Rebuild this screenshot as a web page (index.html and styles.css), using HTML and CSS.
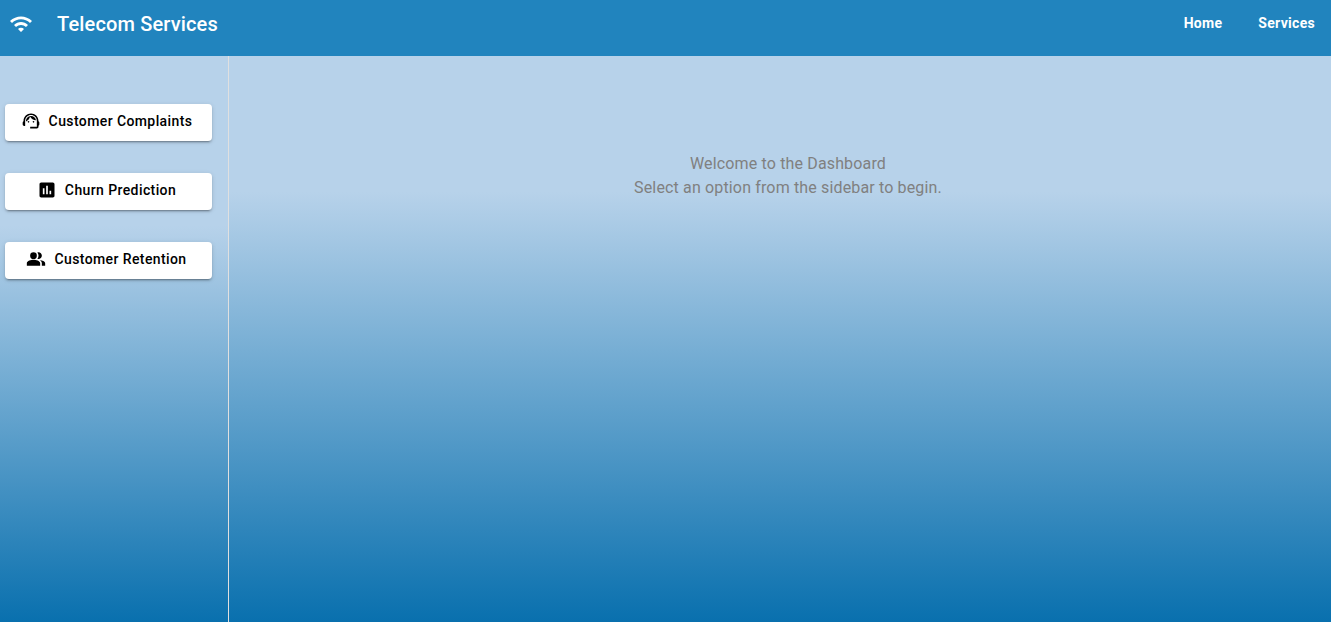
FILE: index.html
```html
<!DOCTYPE html>
<html lang="en">
<head>
<meta charset="utf-8">
<title>Telecom Services</title>
<link rel="stylesheet" href="styles.css">
</head>
<body>
<header class="topbar">
  <svg class="logo" viewBox="0 0 24 24" aria-hidden="true"><path d="m1 9 2 2c4.970-4.970 13.030-4.970 18 0l2-2C16.930 2.930 7.080 2.930 1 9m8 8 3 3 3-3c-1.650-1.660-4.340-1.660-6 0m-4-4 2 2c2.760-2.760 7.240-2.760 10 0l2-2C15.140 9.140 8.870 9.140 5 13"/></svg>
  <h1 class="title">Telecom Services</h1>
  <nav class="nav">
    <a class="nav-link" href="#">Home</a>
    <a class="nav-link" href="#">Services</a>
  </nav>
</header>
<div class="layout">
  <aside class="sidebar">
    <button class="side-button" type="button">
      <svg class="icon" viewBox="0 0 24 24" aria-hidden="true"><path d="M21 12.220C21 6.730 16.740 3 12 3c-4.690 0-9 3.650-9 9.280-.6.340-1 .98-1 1.720v2c0 1.100.9 2 2 2h1v-6.100c0-3.870 3.130-7 7-7s7 3.130 7 7V19h-8v2h8c1.100 0 2-.9 2-2v-1.220c.59-.31 1-.92 1-1.640v-2.300c0-.7-.41-1.310-1-1.620"/><circle cx="9" cy="13" r="1"/><circle cx="15" cy="13" r="1"/><path d="M18 11.030C17.520 8.180 15.040 6 12.050 6c-3.030 0-6.290 2.510-6.030 6.450 2.470-1.010 4.330-3.210 4.860-5.890 1.310 2.630 4 4.440 7.120 4.470"/></svg>
      <span class="label">Customer Complaints</span>
    </button>
    <button class="side-button" type="button">
      <svg class="icon" viewBox="0 0 24 24" aria-hidden="true"><path d="M19 3H5c-1.100 0-2 .9-2 2v14c0 1.100.9 2 2 2h14c1.100 0 2-.9 2-2V5c0-1.100-.9-2-2-2M9 17H7v-7h2zm4 0h-2V7h2zm4 0h-2v-4h2z"/></svg>
      <span class="label">Churn Prediction</span>
    </button>
    <button class="side-button" type="button">
      <svg class="icon" viewBox="0 0 24 24" aria-hidden="true"><path d="M16.670 13.130C18.040 14.060 19 15.320 19 17v3h4v-3c0-2.180-3.570-3.470-6.330-3.870"/><circle cx="9" cy="8" r="4"/><path d="M15 12c2.210 0 4-1.790 4-4s-1.790-4-4-4c-.47 0-.91.100-1.330.240C14.500 5.270 15 6.580 15 8s-.5 2.730-1.330 3.760c.42.140.86.240 1.330.240m-6 1c-2.670 0-8 1.340-8 4v3h16v-3c0-2.660-5.330-4-8-4"/></svg>
      <span class="label">Customer Retention</span>
    </button>
  </aside>
  <main class="content">
    <p class="message">Welcome to the Dashboard<br>Select an option from the sidebar to begin.</p>
  </main>
</div>
</body>
</html>
```
FILE: styles.css
```css
* { box-sizing: border-box; }

body {
  margin: 0;
  min-height: 100vh;
  display: flex;
  flex-direction: column;
  font-family: Roboto, "Liberation Sans", sans-serif;
}

.topbar {
  display: flex;
  align-items: center;
  height: 56px;
  padding: 0 16px 8px 9px;
  background: #2184be;
  color: #fff;
}

.logo { width: 24px; height: 24px; margin-right: 24px; fill: currentColor; }

.title { margin: 0; font-size: 20px; line-height: 32px; font-weight: 500; letter-spacing: 0.15px; }

.nav { display: flex; gap: 36px; margin-left: auto; padding-bottom: 2px; }

.nav-link {
  color: inherit;
  font-size: 14px;
  line-height: 24px;
  font-weight: 700;
  letter-spacing: 0.3px;
  text-decoration: none;
}

.layout {
  flex: 1;
  display: flex;
  background: linear-gradient(to bottom, #b7d2ea 24%, #0970ae);
}

.sidebar {
  width: 229px;
  padding: 48px 16px 0 5px;
  display: flex;
  flex-direction: column;
  gap: 32px;
  border-right: 1px solid #e0e0e0;
  background: linear-gradient(to bottom, #b7d2ea 30%, #0970ae);
}

.side-button {
  display: flex;
  align-items: center;
  justify-content: center;
  gap: 8px;
  padding: 5px 12px 8px 8px;
  border: 0;
  border-radius: 4px;
  background: #fff;
  color: #000;
  font-family: inherit;
  font-size: 14px;
  line-height: 24px;
  font-weight: 500;
  letter-spacing: 0.4px;
  box-shadow: 0 3px 1px -2px rgba(0, 0, 0, 0.2), 0 2px 2px rgba(0, 0, 0, 0.14), 0 1px 5px rgba(0, 0, 0, 0.12);
}

.label { white-space: nowrap; }

.icon { flex: none; width: 20px; height: 20px; fill: currentColor; }

.content { flex: 1; padding: 96px 24px 24px 40px; }

.message {
  margin: 0;
  color: #808080;
  font-size: 16px;
  line-height: 24px;
  text-align: center;
  letter-spacing: 0.15px;
}
```
